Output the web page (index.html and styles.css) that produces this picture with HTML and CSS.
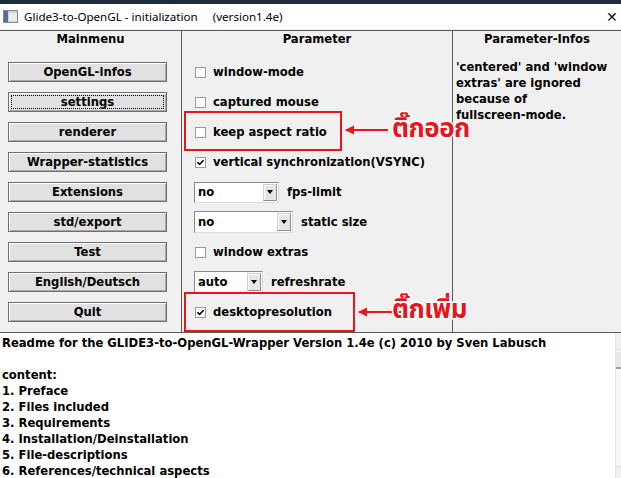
FILE: index.html
```html
<!DOCTYPE html>
<html>
<head>
<meta charset="utf-8">
<link rel="stylesheet" href="styles.css">
</head>
<body>
<div class="taskbar"></div>
<div class="titlebar">
  <svg class="appicon" width="15" height="13" viewBox="0 0 15 13"><rect x="0.5" y="0.5" width="14" height="12" fill="#c9d3de" stroke="#7d8a99"/><rect x="1" y="1" width="4" height="11" fill="#5d6f86"/><rect x="6" y="3" width="8" height="8" fill="#e9edf2"/></svg>
  <span class="title">Glide3-to-OpenGL - initialization</span>
  <span class="version">(version1.4e)</span>
  <span class="close">✕</span>
</div>
<div class="main">
  <section class="col menu">
    <h2 class="head">Mainmenu</h2>
    <div class="rows">
      <div class="row"><button class="btn">OpenGL-infos</button></div>
      <div class="row"><button class="btn focus"><span class="focusring">settings</span></button></div>
      <div class="row"><button class="btn">renderer</button></div>
      <div class="row"><button class="btn">Wrapper-statistics</button></div>
      <div class="row"><button class="btn">Extensions</button></div>
      <div class="row"><button class="btn">std/export</button></div>
      <div class="row"><button class="btn">Test</button></div>
      <div class="row"><button class="btn">English/Deutsch</button></div>
      <div class="row"><button class="btn">Quit</button></div>
    </div>
  </section>
  <section class="col params">
    <h2 class="head">Parameter</h2>
    <div class="rows">
      <div class="row"><span class="cb"></span><span class="lbl">window-mode</span></div>
      <div class="row"><span class="cb"></span><span class="lbl">captured mouse</span></div>
      <div class="row"><span class="cb"></span><span class="lbl">keep aspect ratio</span></div>
      <div class="row"><span class="cb checked"><svg viewBox="0 0 11 11" width="11" height="11"><path d="M2.5 5.2 L4.6 7.3 L8.6 3.2" fill="none" stroke="#000" stroke-width="1.6"/></svg></span><span class="lbl">vertical synchronization(VSYNC)</span></div>
      <div class="row"><span class="sel w85"><span class="val">no</span><span class="arrow"></span></span><span class="lbl2">fps-limit</span></div>
      <div class="row"><span class="sel w99 tall"><span class="val">no</span><span class="arrow"></span></span><span class="lbl2">static size</span></div>
      <div class="row"><span class="cb"></span><span class="lbl">window extras</span></div>
      <div class="row"><span class="sel w69 tall"><span class="val">auto</span><span class="arrow"></span></span><span class="lbl2">refreshrate</span></div>
      <div class="row"><span class="cb checked"><svg viewBox="0 0 11 11" width="11" height="11"><path d="M2.5 5.2 L4.6 7.3 L8.6 3.2" fill="none" stroke="#000" stroke-width="1.6"/></svg></span><span class="lbl">desktopresolution</span></div>
    </div>
    <div class="mark mark1"></div>
    <div class="mark mark2"></div>
    <svg class="arrow1" width="46" height="12" viewBox="0 0 46 12"><path d="M2 6 H44" stroke="#e8161c" stroke-width="2"/><path d="M1 6 L10 1.5 L10 10.5 Z" fill="#e8161c"/></svg>
    <svg class="arrow2" width="46" height="12" viewBox="0 0 46 12"><path d="M2 6 H44" stroke="#e8161c" stroke-width="2"/><path d="M1 6 L10 1.5 L10 10.5 Z" fill="#e8161c"/></svg>
    <span class="note note1">ติ๊กออก</span>
    <span class="note note2">ติ๊กเพิ่ม</span>
  </section>
  <section class="col infos">
    <h2 class="head">Parameter-Infos</h2>
    <p class="info">'centered' and 'window<br>extras' are ignored<br>because of<br>fullscreen-mode.</p>
  </section>
</div>
<div class="readme">
  <div class="text">Readme for the GLIDE3-to-OpenGL-Wrapper Version 1.4e (c) 2010 by Sven Labusch

content:
1. Preface
2. Files included
3. Requirements
4. Installation/Deinstallation
5. File-descriptions
6. References/technical aspects</div>
  <div class="scrollbar">
    <span class="sb-up"></span>
    <span class="sb-thumb"></span>
    <span class="sb-track"></span>
    <span class="sb-down"></span>
  </div>
</div>
</body>
</html>
```

FILE: styles.css
```css
* { box-sizing: border-box; }
html, body { margin: 0; padding: 0; }
body {
  width: 621px;
  height: 478px;
  overflow: hidden;
  background: #f0f0f0;
  font-family: "DejaVu Sans", sans-serif;
  font-weight: bold;
  font-size: 11.6px;
  color: #000;
}
.taskbar { height: 4px; background: #1f2d3c; }
.titlebar {
  height: 25px;
  background: #fff;
  display: flex;
  align-items: center;
  font-family: "Noto Sans", sans-serif;
  font-weight: normal;
  font-size: 11.6px;
  color: #000;
  padding-left: 3px;
}
.appicon { margin-right: 6px; }
.title { margin-right: 15px; }
.close { margin-left: auto; margin-right: 3px; font-size: 14px; color: #111; }

.main {
  height: 303px;
  padding-top: 1px;
  display: grid;
  grid-template-columns: 182px 271px 1fr;
}
.col {
  border-top: 1px solid #5a5a5a;
  position: relative;
}
.menu, .params { border-right: 1px solid #5a5a5a; }
.head {
  margin: 0;
  height: 26px;
  font-size: 11.6px;
  line-height: 16px;
  text-align: center;
  padding-top: 0;
}
.rows { display: flex; flex-direction: column; }
.row { height: 30px; display: flex; align-items: center; }

.btn {
  margin-left: 8px;
  width: 159px;
  height: 20px;
  padding: 0;
  font: inherit;
  color: #000;
  background: #e1e1e1;
  border: 1px solid #6e6e6e;
  box-shadow: inset 1px 1px 0 #fff, inset -1px -1px 0 #a8a8a8;
  display: flex;
  align-items: center;
  justify-content: center;
}
.focus { padding: 2px; }
.focusring {
  width: 100%;
  height: 100%;
  border: 1px dotted #000;
  display: flex;
  align-items: center;
  justify-content: center;
}

.params .row { padding-left: 12px; }
.cb {
  width: 11px;
  height: 11px;
  margin-left: 1px;
  background: #fff;
  border: 1px solid #9a9a9a;
  display: flex;
}
.cb svg { margin: -1px; }
.lbl { margin-left: 7px; }
.sel {
  height: 21px;
  background: #fff;
  border: 1px solid #8a8a8a;
  border-right-color: #dcdcdc;
  border-bottom-color: #dcdcdc;
  display: flex;
  align-items: center;
  padding: 1px;
}
.sel.tall { height: 22px; }
.w85 { width: 85px; }
.w99 { width: 99px; }
.w69 { width: 69px; }
.val { flex: 1; padding-left: 2px; }
.arrow {
  width: 14px;
  height: 100%;
  background: #e6e6e6;
  border: 1px solid #d0d0d0;
  border-right-color: #8c8c8c;
  border-bottom-color: #8c8c8c;
  box-shadow: inset 1px 1px 0 #fff;
  position: relative;
}
.arrow::after {
  content: "";
  position: absolute;
  left: 3px;
  top: 50%;
  margin-top: -2px;
  border-left: 3.5px solid transparent;
  border-right: 3.5px solid transparent;
  border-top: 4px solid #000;
}
.lbl2 { margin-left: 8px; }

.mark {
  position: absolute;
  border: 2px solid #e8161c;
}
.mark1 { left: 2px; top: 80px; width: 158px; height: 40px; }
.mark2 { left: 2px; top: 261px; width: 171px; height: 40px; }
.arrow1 { position: absolute; left: 162px; top: 93px; }
.arrow2 { position: absolute; left: 175px; top: 275px; }
.note {
  position: absolute;
  color: #e8161c;
  font-family: "Noto Sans Thai", "Noto Sans", "DejaVu Sans", sans-serif;
  font-weight: bold;
  font-size: 26px;
  line-height: 30px;
  -webkit-text-stroke: 3px #fff;
  paint-order: stroke fill;
  white-space: nowrap;
  letter-spacing: -0.5px;
}
.note1 { left: 210px; top: 83px; }
.note2 { left: 210px; top: 264px; }

.info {
  margin: 0;
  padding: 2px 4px 0 3px;
  line-height: 16px;
  white-space: nowrap;
}

.readme {
  height: 146px;
  background: #fff;
  border-top: 1px solid #5a5a5a;
  display: flex;
}
.text {
  flex: 1;
  white-space: pre;
  line-height: 16px;
  padding: 2px 0 0 2px;
  overflow: hidden;
}
.scrollbar {
  width: 6px;
  display: flex;
  flex-direction: column;
  background: #f4f4f4;
  border-left: 1px solid #e6e6e6;
}
.sb-up { height: 17px; background: #f0f0f0; border-bottom: 1px solid #dcdcdc; }
.sb-thumb { height: 17px; margin-top: 2px; background: #e8e8e8; border-bottom: 2px solid #a0a0a0; }
.sb-track { flex: 1; background: #f6f6f6; }
.sb-down { height: 12px; background: #f0f0f0; border-top: 1px solid #dcdcdc; }
```
